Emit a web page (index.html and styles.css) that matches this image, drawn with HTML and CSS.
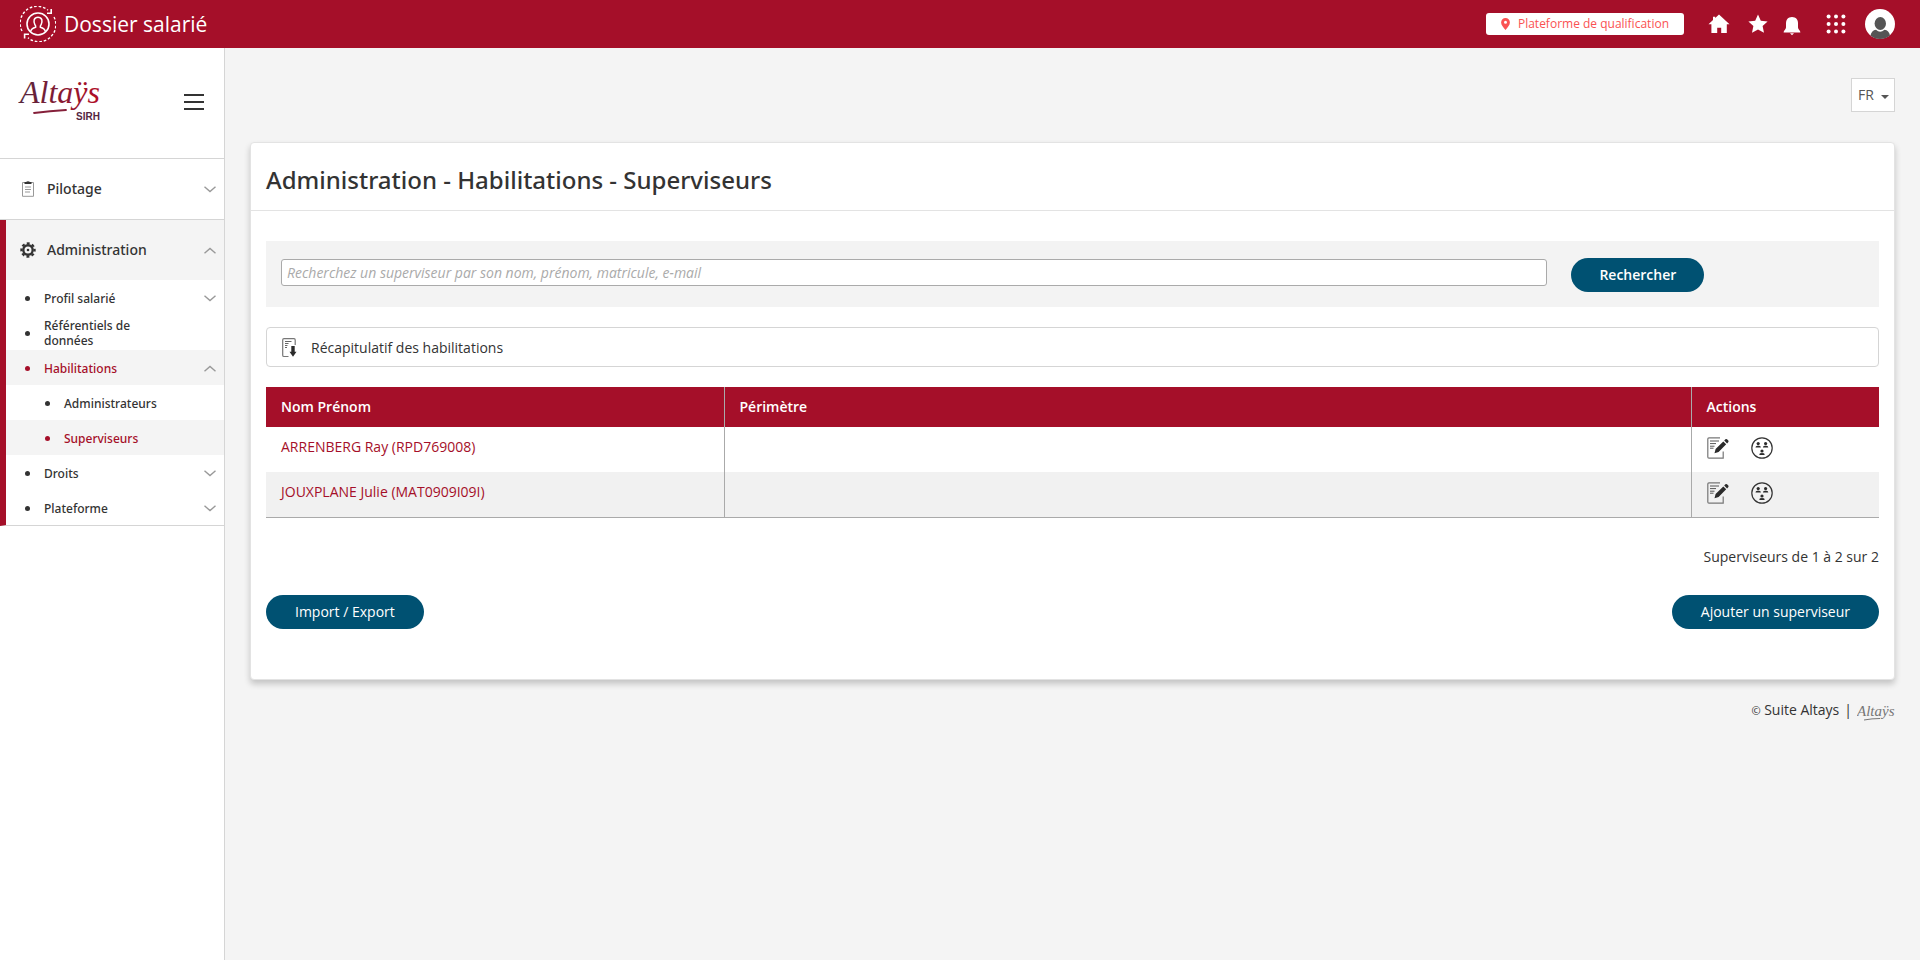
FILE: index.html
```html
<!DOCTYPE html>
<html lang="fr">

<head>
    <meta charset="UTF-8">
    <meta name="viewport" content="width=device-width, initial-scale=1.0">
    <title>Administration - Habilitations - Superviseurs</title>
    <link rel="stylesheet" href="styles.css">
</head>

<body>
    <!-- Icons used several times -->
    <svg class="sprite" aria-hidden="true">
        <symbol id="chevron" viewBox="0 0 12 7">
            <path d="M0.5 0.8 L6 5.6 L11.5 0.8" fill="none" stroke="#999" stroke-width="1.4" />
        </symbol>
        <symbol id="edit" viewBox="0 0 22 22">
            <path d="M13 .8H2Q.8.8.8 2V20Q.8 21.2 2 21.2H16.2V14.5" fill="none" stroke="#777" stroke-width="1.2" />
            <path d="M3 4H12M3 6.6H9M3 9.2H7.5M3 11.2H6.5" fill="none" stroke="#555" />
            <path d="M7.5 16.2 8.6 12 16.3 4.4 19.2 7.3 11.6 15Z M17.2 3.5 18.4 2.3Q19.2 1.6 20 2.3L21.3 3.6Q22 4.4 21.2 5.2L20.1 6.4Z" fill="#2b2b2b" />
        </symbol>
        <symbol id="group" viewBox="0 0 22 22">
            <circle cx="11" cy="11" r="10.2" fill="none" stroke="#333" stroke-width="1.2" />
            <g fill="#2b2b2b">
                <circle cx="7.2" cy="6.6" r="1.6" />
                <path d="M4.5 10.6Q4.5 8.3 7.2 8.8Q9.9 8.3 9.9 10.6Z" />
                <circle cx="14.6" cy="6.6" r="1.6" />
                <path d="M11.9 10.6Q11.9 8.3 14.6 8.8Q17.3 8.3 17.3 10.6Z" />
                <circle cx="11" cy="14" r="1.6" />
                <path d="M8.3 18Q8.3 15.7 11 16.2Q13.7 15.7 13.7 18Z" />
            </g>
        </symbol>
    </svg>

    <header class="topbar">
        <a class="brand" href="#">
            <svg width="36" height="36" viewBox="0 0 36 36" fill="none" stroke="#fff">
                <path d="M2 25A17 17 0 0 1 28 4.2" stroke-width="1.4" stroke-dasharray="2.6 1.9" />
                <path d="M34 11A17 17 0 0 1 8 31.8" stroke-width="1.4" stroke-dasharray="2.6 1.9" />
                <path d="M27 7.2H31.2V3M9 28.3H4.6V32.6" stroke-width="1.6" />
                <circle cx="18" cy="18" r="11" stroke-width="1.6" />
                <path d="M10.5 26Q11 22.3 15.7 21.2Q16 20 14.8 18.5Q13.6 16 14.2 13.6Q15.2 11.3 18 11.3Q20.8 11.3 21.8 13.6Q22.4 16 21.2 18.5Q20 20 20.3 21.2Q25 22.3 25.5 26" stroke-width="1.5" />
            </svg>
            Dossier salarié
        </a>
        <div class="top-actions">
            <a class="env" href="#">
                <svg width="9" height="12" viewBox="0 0 9 12"><path d="M4.5 0A4.4 4.4 0 0 0 .1 4.4C.1 7 2.6 9.5 4.5 12C6.4 9.5 8.9 7 8.9 4.4A4.4 4.4 0 0 0 4.5 0ZM4.5 2.8A1.5 1.5 0 1 1 4.5 5.8A1.5 1.5 0 1 1 4.5 2.8Z" fill="#fa5252" fill-rule="evenodd" /></svg>
                Plateforme de qualification
            </a>
            <nav class="top-icons">
                <a href="#" aria-label="Accueil"><svg width="22" height="20" viewBox="0 0 22 20" fill="#fff"><path d="M11 .5 21.5 10.2H18.8V19H13.2V13.8H9.2V19H3.4V10.2H.5L5 6V2.8H7.2V4Z" /></svg></a>
                <a href="#" aria-label="Favoris"><svg width="20" height="20" viewBox="0 0 20 20" fill="#fff"><path d="M10 .6 12.8 6.8 19.6 7.6 14.6 12.1 16 18.8 10 15.4 4 18.8 5.4 12.1.4 7.6 7.2 6.8Z" /></svg></a>
                <a class="bell" href="#" aria-label="Notifications"><svg width="18" height="20" viewBox="0 0 18 20" fill="#fff"><path d="M9 1C5 1 3 3.8 3 7.3V11.5C3 13.6.6 14.2.6 16.6H17.4C17.4 14.2 15 13.6 15 11.5V7.3C15 3.8 13 1 9 1ZM7 17.3H11L9 19.3Z" /></svg></a>
                <a class="apps" href="#" aria-label="Applications"><svg width="20" height="20" viewBox="0 0 20 20" fill="#fff">
                    <circle cx="2.6" cy="2.6" r="2" /><circle cx="10" cy="2.6" r="2" /><circle cx="17.4" cy="2.6" r="2" />
                    <circle cx="2.6" cy="10" r="2" /><circle cx="10" cy="10" r="2" /><circle cx="17.4" cy="10" r="2" />
                    <circle cx="2.6" cy="17.4" r="2" /><circle cx="10" cy="17.4" r="2" /><circle cx="17.4" cy="17.4" r="2" />
                </svg></a>
                <a href="#" aria-label="Mon compte"><svg width="30" height="30" viewBox="0 0 30 30"><circle cx="15" cy="15" r="15" fill="#fff" /><path d="M5.5 26.5Q6.5 21.5 11 20.8Q15 24.5 19.5 20.8Q24 21.5 25 26.5Q20.5 30 15 30Q9.5 30 5.5 26.5Z" fill="#555" /><ellipse cx="15.3" cy="14.5" rx="5.7" ry="6.5" fill="#555" /></svg></a>
            </nav>
        </div>
    </header>

    <div class="layout">
        <aside class="sidebar">
            <div class="sidebar-head">
                <svg class="logo" width="84" height="50" viewBox="0 0 84 50" role="img" aria-label="Altaÿs SIRH">
                    <defs>
                        <linearGradient id="logo-ink" x1="0" x2="1"><stop offset="0" stop-color="#55263f" /><stop offset="1" stop-color="#b30d27" /></linearGradient>
                    </defs>
                    <text class="logo-name" x="2" y="26" fill="url(#logo-ink)">Altaÿs</text>
                    <path d="M16 36Q32 34 48 33" fill="none" stroke="#85203a" stroke-width="1.8" stroke-linecap="round" />
                    <text class="logo-suite" x="58" y="43">SIRH</text>
                </svg>
                <button class="burger" aria-label="Menu"><svg width="20" height="16" viewBox="0 0 20 16" fill="#333"><path d="M0 0H20V2H0ZM0 7H20V9H0ZM0 14H20V16H0Z" /></svg></button>
            </div>
            <ul class="menu">
                <li class="menu-item">
                    <a class="menu-link" href="#">
                        <svg class="menu-icon" width="14" height="16" viewBox="0 0 14 16"><path d="M1.5 1.5H12.5V15.3H1.5Z" fill="none" stroke="#999" /><path d="M3.5 1H5Q7-.6 9 1H10.5V3H3.5Z" fill="#333" /><path d="M4 6H10M4 8.5H10M4 11H9" stroke="#999" /></svg>
                        Pilotage
                        <svg class="chevron" width="12" height="7"><use href="#chevron" /></svg>
                    </a>
                </li>
                <li class="menu-item open">
                    <a class="menu-link" href="#">
                        <svg class="menu-icon" width="16" height="16" viewBox="0 0 16 16"><circle cx="8" cy="8" r="4.7" fill="none" stroke="#333" stroke-width="2.4" /><circle cx="8" cy="8" r="6.6" fill="none" stroke="#333" stroke-width="2.2" stroke-dasharray="2.9 2.284" stroke-dashoffset="1.45" /><circle cx="8" cy="8" r="1.3" fill="#333" /></svg>
                        Administration
                        <svg class="chevron up" width="12" height="7"><use href="#chevron" /></svg>
                    </a>
                    <ul class="submenu">
                        <li><a href="#"><span>Profil salarié</span><svg class="chevron" width="12" height="7"><use href="#chevron" /></svg></a></li>
                        <li><a href="#"><span>Référentiels de données</span></a></li>
                        <li>
                            <a class="active" href="#"><span>Habilitations</span><svg class="chevron up" width="12" height="7"><use href="#chevron" /></svg></a>
                            <ul class="submenu-inner">
                                <li><a href="#"><span>Administrateurs</span></a></li>
                                <li><a class="active" href="#"><span>Superviseurs</span></a></li>
                            </ul>
                        </li>
                        <li><a href="#"><span>Droits</span><svg class="chevron" width="12" height="7"><use href="#chevron" /></svg></a></li>
                        <li><a href="#"><span>Plateforme</span><svg class="chevron" width="12" height="7"><use href="#chevron" /></svg></a></li>
                    </ul>
                </li>
            </ul>
        </aside>

        <main class="content">
            <div class="lang">
                <select aria-label="Langue">
                    <option>FR</option>
                </select>
            </div>

            <section class="card">
                <h1>Administration - Habilitations - Superviseurs</h1>
                <div class="card-body">
                    <form class="search">
                        <input type="text" aria-label="Rechercher un superviseur" placeholder="Recherchez un superviseur par son nom, prénom, matricule, e-mail">
                        <button class="btn btn-search" type="button">Rechercher</button>
                    </form>

                    <a class="recap" href="#">
                        <svg width="16" height="20" viewBox="0 0 16 20"><path d="M6.5 18.5H2Q.7 18.5.7 17.2V2Q.7.7 2 .7H12Q13.2.7 13.2 2V7" fill="none" stroke="#777" stroke-width="1.2" /><path d="M3 3.5H9.5M3 5.5H6.5M3 7.5H5.5M3 9.5H5" stroke="#666" /><path d="M9.3 8H12.7V13.8H14.5L11 18.8 7.5 13.8H9.3Z" fill="#2b2b2b" /></svg>
                        Récapitulatif des habilitations
                    </a>

                    <table>
                        <thead>
                            <tr>
                                <th class="col-name">Nom Prénom</th>
                                <th>Périmètre</th>
                                <th class="col-actions">Actions</th>
                            </tr>
                        </thead>
                        <tbody>
                            <tr>
                                <td><a href="#">ARRENBERG Ray (RPD769008)</a></td>
                                <td></td>
                                <td>
                                    <div class="actions">
                                        <button aria-label="Modifier"><svg width="22" height="22"><use href="#edit" /></svg></button>
                                        <button aria-label="Périmètre"><svg width="22" height="22"><use href="#group" /></svg></button>
                                    </div>
                                </td>
                            </tr>
                            <tr>
                                <td><a href="#">JOUXPLANE Julie (MAT0909I09I)</a></td>
                                <td></td>
                                <td>
                                    <div class="actions">
                                        <button aria-label="Modifier"><svg width="22" height="22"><use href="#edit" /></svg></button>
                                        <button aria-label="Périmètre"><svg width="22" height="22"><use href="#group" /></svg></button>
                                    </div>
                                </td>
                            </tr>
                        </tbody>
                    </table>

                    <p class="count">Superviseurs de 1 à 2 sur 2</p>

                    <div class="card-buttons">
                        <button class="btn">Import / Export</button>
                        <button class="btn">Ajouter un superviseur</button>
                    </div>
                </div>
            </section>

            <footer class="footer">
                <span><small>©</small> Suite Altays</span>
                <span>|</span>
                <svg width="38" height="26" viewBox="0 0 38 26" role="img" aria-label="Altaÿs">
                    <text class="footer-logo" x="0" y="16">Altaÿs</text>
                    <path d="M7 20Q15 18.5 23 18.5" fill="none" stroke="#777" />
                </svg>
            </footer>
        </main>
    </div>
</body>

</html>
```

FILE: styles.css
```css
* {
    box-sizing: border-box;
}

body {
    font-family: "Open Sans", sans-serif;
    font-size: 14px;
    line-height: 20px;
    color: #333;
    margin: 0;
    min-height: 100vh;
    background-color: #f4f4f4;
    display: flex;
    flex-direction: column;
}

a {
    color: inherit;
    text-decoration: none;
}

button,
input,
select {
    font: inherit;
    color: inherit;
}

button {
    padding: 0;
    border: none;
    background: none;
    cursor: pointer;
}

svg {
    display: block;
    flex-shrink: 0;
}

ul {
    list-style: none;
    margin: 0;
    padding: 0;
}

.sprite {
    display: none;
}

.menu,
h1 {
    font-family: "Noto Sans", sans-serif;
}

/* Top bar */
.topbar {
    height: 48px;
    padding: 0 25px 0 20px;
    background-color: #a50f29;
    color: #fff;
    display: flex;
    align-items: center;
    justify-content: space-between;
}

.brand {
    display: flex;
    align-items: center;
    gap: 8px;
    font-size: 21px;
    height: 46px;
}

.top-actions,
.top-icons {
    display: flex;
    align-items: center;
}

.top-actions {
    gap: 24px;
}

.top-icons {
    gap: 18px;
}

.top-icons .bell {
    padding-top: 4px;
    margin-left: -3px;
}

.top-icons .apps {
    padding: 0 1px 0 7px;
}

.env {
    display: flex;
    align-items: center;
    gap: 8px;
    height: 22px;
    padding: 0 15px;
    border-radius: 3px;
    background-color: #fff;
    color: #fa5252;
    font-size: 12px;
}

.layout {
    flex: 1;
    display: flex;
}

/* Sidebar */
.sidebar {
    width: 225px;
    flex-shrink: 0;
    background-color: #fff;
    border-right: 1px solid #d5d5d5;
}

.sidebar-head {
    height: 111px;
    padding: 0 20px 2px 18px;
    border-bottom: 1px solid #d5d5d5;
    display: flex;
    align-items: center;
    justify-content: space-between;
}

.logo-name {
    font-family: "Liberation Serif", serif;
    font-size: 32px;
    font-style: italic;
}

.logo-suite {
    font-family: "Liberation Sans", sans-serif;
    font-size: 10px;
    font-weight: 700;
    fill: #55263f;
}

.menu-item {
    border-bottom: 1px solid #d5d5d5;
}

.menu-item.open {
    border-left: 6px solid #a50f29;
}

.menu-link {
    display: flex;
    align-items: center;
    height: 60px;
    padding: 0 8px 0 20px;
    font-weight: 500;
}

.open .menu-link {
    padding-left: 14px;
    background-color: #f4f4f4;
}

.menu-icon {
    width: 16px;
    margin-right: 11px;
}

.chevron {
    margin-left: auto;
}

.chevron.up {
    transform: rotate(180deg);
}

.submenu a {
    display: flex;
    align-items: center;
    height: 35px;
    padding: 1px 8px 0 19px;
    font-size: 12px;
    line-height: 15px;
    font-weight: 500;
}

.submenu a::before {
    content: "";
    width: 5px;
    height: 5px;
    margin-right: 14px;
    border-radius: 50%;
    background-color: currentColor;
    flex-shrink: 0;
}

.submenu span {
    max-width: 110px;
}

.submenu .submenu-inner a {
    padding-left: 39px;
}

.submenu .active {
    color: #a50f29;
    background-color: #f4f4f4;
}

/* Content */
.content {
    flex: 1;
    min-width: 0;
    padding: 30px 25px;
}

.lang {
    position: relative;
    width: 44px;
    margin: 0 0 30px auto;
}

.lang select {
    width: 100%;
    height: 34px;
    padding: 0 6px;
    border: 1px solid #d5d5d5;
    background-color: #fff;
    color: #555;
    appearance: none;
}

.lang::after {
    content: "";
    position: absolute;
    top: 17px;
    right: 6px;
    border: 4px solid transparent;
    border-top-color: #555;
    border-bottom: none;
    pointer-events: none;
}

.card {
    background-color: #fff;
    border: 1px solid #e3e3e3;
    border-radius: 4px;
    box-shadow: 0 4px 6px rgba(0, 0, 0, 0.2);
}

h1 {
    margin: 0;
    padding: 21px 15px 14px;
    border-bottom: 1px solid #e3e3e3;
    font-size: 24px;
    line-height: 32px;
    font-weight: 500;
}

.card-body {
    padding: 30px 15px 50px;
}

.search {
    display: flex;
    align-items: flex-start;
    gap: 24px;
    padding: 17px 15px 15px;
    background-color: #f3f3f3;
}

.search input {
    width: 80%;
    height: 27px;
    margin: 1px 0 6px;
    padding: 0 5px;
    border: 1px solid #aaa;
    border-radius: 3px;
    background-color: #fff;
}

.search input::placeholder {
    color: #aaa;
    font-style: italic;
}

.btn {
    height: 34px;
    padding: 0 29px;
    border-radius: 17px;
    background-color: #005172;
    color: #fff;
    font-weight: 500;
}

.btn:hover {
    background-color: #003d57;
}

.btn-search {
    padding: 0 28px;
    font-weight: 600;
}

.recap {
    display: flex;
    align-items: center;
    gap: 13px;
    height: 40px;
    margin: 20px 0;
    padding: 1px 15px 0;
    border: 1px solid #d5d5d5;
    border-radius: 4px;
}

table {
    width: 100%;
    border-collapse: collapse;
    border-bottom: 1px solid #aaa;
}

th,
td {
    padding: 10px 15px;
    text-align: left;
    vertical-align: top;
}

th + th,
td + td {
    border-left: 1px solid #aaa;
}

th {
    background-color: #a50f29;
    color: #fff;
    font-weight: 600;
}

.col-name {
    width: 458px;
}

.col-actions {
    width: 188px;
}

td {
    height: 45px;
    color: #a50f29;
}

tbody tr:nth-child(even) {
    background-color: #f1f1f1;
}

.actions {
    display: flex;
    gap: 22px;
}

.count {
    margin: 29px 0 28px;
    text-align: right;
}

.card-buttons {
    display: flex;
    justify-content: space-between;
}

.footer {
    display: flex;
    justify-content: flex-end;
    gap: 5px;
    padding-top: 20px;
}

.footer small {
    font-size: 11px;
}

.footer-logo {
    font-family: "Liberation Serif", serif;
    font-size: 15px;
    font-style: italic;
    fill: #777;
}
```
